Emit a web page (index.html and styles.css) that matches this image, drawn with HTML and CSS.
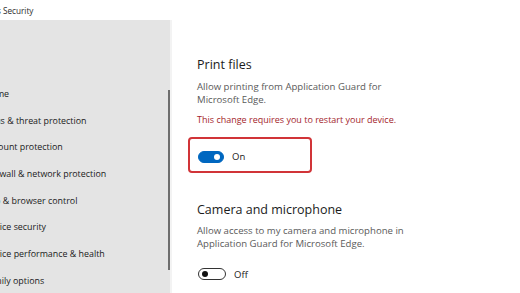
FILE: index.html
```html
<!DOCTYPE html>
<html>
  <head>
    <meta charset="utf-8" />
    <title>Windows Security</title>
    <link rel="stylesheet" href="styles.css">
  </head>
  <body>
    <div class="titlebar">Windows Security</div>
    <div class="main">
      <div class="sidebar">
        <div class="scrollbar"></div>
        <ul class="nav">
          <li>Home</li>
          <li>Virus &amp; threat protection</li>
          <li>Account protection</li>
          <li>Firewall &amp; network protection</li>
          <li>App &amp; browser control</li>
          <li>Device security</li>
          <li>Device performance &amp; health</li>
          <li>Family options</li>
        </ul>
      </div>
      <div class="content">
        <div class="setting">
          <h2>Print files</h2>
          <p class="desc">Allow printing from Application Guard for<br>Microsoft Edge.</p>
          <p class="warn">This change requires you to restart your device.</p>
          <div class="toggle-box highlight">
            <span class="toggle on"></span>
            <span class="state">On</span>
          </div>
        </div>
        <div class="setting">
          <h2>Camera and microphone</h2>
          <p class="desc">Allow access to my camera and microphone in<br>Application Guard for Microsoft Edge.</p>
          <div class="toggle-box">
            <span class="toggle"></span>
            <span class="state">Off</span>
          </div>
        </div>
      </div>
    </div>
  </body>
</html>
```
FILE: styles.css
```css
body {
  margin: 0;
  height: 293px;
  overflow: hidden;
  background-color: #ffffff;
  font-family: "Open Sans", "Noto Sans", sans-serif;
  color: #1b1b1b;
  display: flex;
  flex-direction: column;
}

.titlebar {
  height: 20px;
  line-height: 21px;
  font-size: 8.2px;
  color: #2b2b2b;
  margin-left: -34px;
  white-space: nowrap;
}

.main {
  flex: 1;
  display: flex;
}

.sidebar {
  width: 170px;
  background-color: #e4e4e4;
  border-right: 2px solid #f3f3f3;
  position: relative;
  overflow: hidden;
}

.scrollbar {
  position: absolute;
  left: 168px;
  top: 70px;
  width: 2px;
  height: 180px;
  background-color: #6e6e6e;
}

.nav {
  list-style: none;
  margin: 66px 0 0 -16px;
  padding: 0;
}

.nav li {
  height: 26.7px;
  line-height: 16px;
  font-size: 8.9px;
  color: #1a1a1a;
  white-space: nowrap;
}

.content {
  flex: 1;
  padding-left: 25px;
  margin-top: -20px;
}

.setting {
  padding-top: 57px;
}

.setting + .setting {
  padding-top: 29px;
}

h2 {
  margin: 0;
  font-size: 12.5px;
  font-weight: normal;
  line-height: 16px;
  color: #1b1b1b;
}

.desc {
  margin: 6.5px 0 0;
  font-size: 9.6px;
  line-height: 13px;
  color: #5a5a5a;
}

.setting + .setting .desc {
  margin-top: 5.5px;
}

.warn {
  margin: 7px 0 0;
  font-size: 9px;
  line-height: 13px;
  color: #a4262c;
}

.toggle-box {
  display: flex;
  align-items: center;
  gap: 8px;
  box-sizing: border-box;
  width: 124px;
  height: 36px;
  padding: 3px 0 0 1px;
  margin-top: 5px;
}

.toggle-box.highlight {
  margin: 11.5px 0 0 -9px;
  padding-left: 8px;
  border: 2px solid #d13438;
  border-radius: 4px;
}

.toggle {
  width: 26px;
  height: 12px;
  border: 1px solid #333333;
  border-radius: 8px;
  position: relative;
  box-sizing: border-box;
}

.setting + .setting .toggle {
  width: 28px;
}

.toggle::after {
  content: "";
  position: absolute;
  top: 2px;
  left: 3px;
  width: 6px;
  height: 6px;
  border-radius: 50%;
  background-color: #111111;
}

.toggle.on {
  background-color: #0067c0;
  border-color: #0067c0;
}

.toggle.on::after {
  left: auto;
  right: 3px;
  background-color: #ffffff;
}

.state {
  font-size: 9.5px;
  color: #1b1b1b;
}
```
